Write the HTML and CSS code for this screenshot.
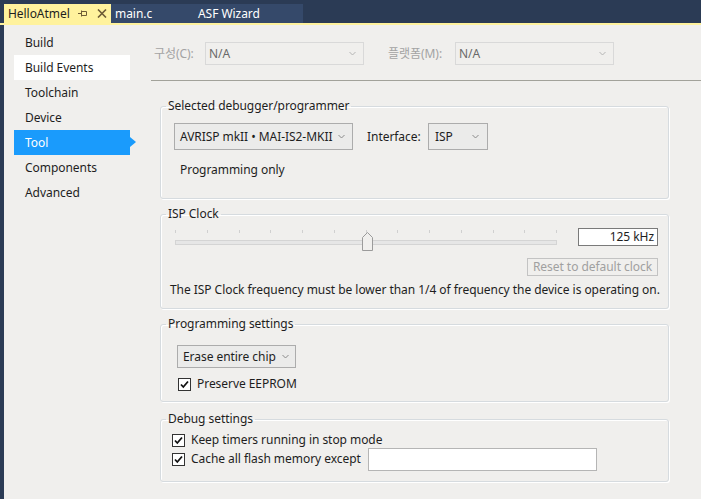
FILE: index.html
```html
<!DOCTYPE html>
<html>
<head>
<meta charset="utf-8">
<link rel="stylesheet" href="styles.css">
</head>
<body>
<div class="window">
  <div class="tabbar">
    <div class="tab tab-active">
      <span class="tab-title">HelloAtmel</span>
      <svg class="pin" width="9" height="7" viewBox="0 0 9 7"><path d="M0 3.5H4M3.5 0.5V6.5M4 1.5H8.5V5.5H4" fill="none" stroke="#6e5c36" stroke-width="1"/></svg>
      <svg class="close" width="10" height="9" viewBox="0 0 10 9"><path d="M1 0.5L9 8.5M9 0.5L1 8.5" stroke="#6e5c36" stroke-width="1.6"/></svg>
    </div>
    <div class="tab-group">
      <span class="tab tab-inactive t-main">main.c</span>
      <span class="tab tab-inactive t-asf">ASF Wizard</span>
    </div>
  </div>
  <div class="accent"></div>
  <div class="body">
    <nav class="sidebar">
      <div class="nav-item">Build</div>
      <div class="nav-item hover">Build Events</div>
      <div class="nav-item">Toolchain</div>
      <div class="nav-item">Device</div>
      <div class="nav-item selected">Tool</div>
      <div class="nav-item">Components</div>
      <div class="nav-item">Advanced</div>
    </nav>
    <main class="content">
      <div class="config-row">
        <span class="dis-label">구성(C):</span>
        <div class="combo combo-dis c-config"><span>N/A</span><svg width="7" height="5" viewBox="0 0 7 5"><path d="M0.5 1L3.5 4L6.5 1" fill="none" stroke="#b4b4b4"/></svg></div>
        <span class="dis-label l-platform">플랫폼(M):</span>
        <div class="combo combo-dis c-platform"><span>N/A</span><svg width="7" height="5" viewBox="0 0 7 5"><path d="M0.5 1L3.5 4L6.5 1" fill="none" stroke="#b4b4b4"/></svg></div>
      </div>
      <div class="separator"></div>

      <fieldset class="group g1">
        <legend>Selected debugger/programmer</legend>
        <div class="dbg-row">
          <div class="combo c-tool"><span>AVRISP mkII • MAI-IS2-MKII</span><svg width="7" height="5" viewBox="0 0 7 5"><path d="M0.5 1L3.5 4L6.5 1" fill="none" stroke="#8a8a8a"/></svg></div>
          <span class="if-label">Interface:</span>
          <div class="combo c-if"><span>ISP</span><svg width="7" height="5" viewBox="0 0 7 5"><path d="M0.5 1L3.5 4L6.5 1" fill="none" stroke="#8a8a8a"/></svg></div>
        </div>
        <div class="prog-only">Programming only</div>
      </fieldset>

      <fieldset class="group g2">
        <legend>ISP Clock</legend>
        <div class="clock-row">
          <div class="slider">
            <div class="ticks">
              <i></i><i></i><i></i><i></i><i></i><i></i><i></i><i></i><i></i><i></i><i></i><i></i><i></i>
            </div>
            <div class="track"></div>
            <svg class="thumb" width="11" height="19" viewBox="0 0 11 19"><path d="M0.5 18.5V5.5L5.5 0.5L10.5 5.5V18.5Z" fill="#f0efed" stroke="#9b9b9b"/></svg>
          </div>
          <div class="freq">125 kHz</div>
        </div>
        <div class="reset-row"><div class="reset-btn">Reset to default clock</div></div>
        <div class="clock-note">The ISP Clock frequency must be lower than 1/4 of frequency the device is operating on.</div>
      </fieldset>

      <fieldset class="group g3">
        <legend>Programming settings</legend>
        <div class="combo c-erase"><span>Erase entire chip</span><svg width="7" height="5" viewBox="0 0 7 5"><path d="M0.5 1L3.5 4L6.5 1" fill="none" stroke="#8a8a8a"/></svg></div>
        <label class="check-row cr-eeprom">
          <svg class="cb" width="13" height="13" viewBox="0 0 13 13"><rect x="0.5" y="0.5" width="12" height="12" fill="#fff" stroke="#333"/><path d="M3 6.5L5.3 9L10 3.5" fill="none" stroke="#111" stroke-width="1.8"/></svg>
          <span>Preserve EEPROM</span>
        </label>
      </fieldset>

      <fieldset class="group g4">
        <legend>Debug settings</legend>
        <label class="check-row cr-timers">
          <svg class="cb" width="13" height="13" viewBox="0 0 13 13"><rect x="0.5" y="0.5" width="12" height="12" fill="#fff" stroke="#333"/><path d="M3 6.5L5.3 9L10 3.5" fill="none" stroke="#111" stroke-width="1.8"/></svg>
          <span>Keep timers running in stop mode</span>
        </label>
        <div class="check-row cr-cache">
          <svg class="cb" width="13" height="13" viewBox="0 0 13 13"><rect x="0.5" y="0.5" width="12" height="12" fill="#fff" stroke="#333"/><path d="M3 6.5L5.3 9L10 3.5" fill="none" stroke="#111" stroke-width="1.8"/></svg>
          <span>Cache all flash memory except</span>
          <div class="except-box"></div>
        </div>
      </fieldset>
    </main>
  </div>
</div>
</body>
</html>
```
FILE: styles.css
```css
* { box-sizing: border-box; }
html, body { margin: 0; padding: 0; }
body {
  width: 701px;
  height: 499px;
  overflow: hidden;
  background: #f0efed;
  font-family: "Noto Sans", "Noto Sans CJK KR", sans-serif;
  font-size: 12px;
  line-height: 16px;
  letter-spacing: -0.05px;
  color: #1e1e1e;
}
.window { display: flex; flex-direction: column; height: 499px; }

.tabbar {
  height: 23px;
  background: #2b3b55;
  display: flex;
  align-items: flex-end;
  padding-left: 4px;
}
.tab {
  height: 19px;
  display: flex;
  align-items: center;
  font-size: 12px;
}
.tab-active {
  width: 107px;
  background: #fff29d;
  color: #1e1e1e;
  padding-left: 4px;
}
.tab-title { width: 66px; }
.pin { margin-left: 4px; }
.close { margin-left: 10px; }
.tab-group {
  display: flex;
  width: 192px;
  height: 19px;
  background: #35496a;
}
.tab-inactive { color: #ffffff; }
.t-main { padding-left: 4px; width: 87px; }
.accent { height: 2px; background: #fff29d; }

.body { flex: 1; display: flex; border-left: 4px solid #2b3b55; }

.sidebar {
  width: 146px;
  padding-top: 5px;
  padding-left: 10px;
}
.nav-item {
  width: 116px;
  height: 25px;
  line-height: 25px;
  padding-left: 11px;
  position: relative;
}
.nav-item.hover { background: #ffffff; }
.nav-item.selected { background: #1a9bfc; color: #ffffff; }
.nav-item.selected::after {
  content: "";
  position: absolute;
  left: 116px;
  top: 7px;
  border-left: 6px solid #1a9bfc;
  border-top: 5px solid transparent;
  border-bottom: 5px solid transparent;
}

.content {
  flex: 1;
  display: flex;
  flex-direction: column;
  padding-left: 10px;
}
.config-row {
  display: flex;
  align-items: center;
  margin-top: 17px;
  margin-left: -8px;
  padding-left: 2px;
  height: 23px;
}
.dis-label { color: #a3a3a3; width: 51px; }
.l-platform { margin-left: 24px; width: 67px; }
.combo {
  display: flex;
  align-items: center;
  justify-content: space-between;
  border: 1px solid #acacac;
  background: #ebebea;
  padding: 0 7px 0 6px;
}
.combo svg { flex: none; }
.combo-dis {
  border-color: #d9d9d9;
  background: #f0efed;
  color: #6a6a6a;
  height: 23px;
  width: 159px;
  padding-left: 3px;
}
.separator {
  height: 1px;
  background: #a2a29a;
  margin-top: 15px;
  margin-left: -9px;
}

.group {
  margin: 0;
  width: 509px;
  border: 1px solid #d6dbdf;
  border-radius: 3px;
  box-shadow: inset 1px 1px 0 #ffffff, 1px 1px 0 #ffffff;
  padding: 0 10px 0 0;
  min-width: 0;
}
.group legend {
  margin-left: 5px;
  padding: 0 2px;
  line-height: 16px;
}
.g1 { margin-top: 17px; padding-bottom: 20px; }
.g2 { margin-top: 7px; padding-bottom: 10px; }
.g3 { margin-top: 7px; padding-bottom: 9px; }
.g4 { margin-top: 9px; padding-bottom: 11px; }

.dbg-row {
  display: flex;
  align-items: center;
  margin-top: 9px;
  margin-left: 13px;
}
.c-tool { width: 179px; height: 27px; padding-left: 5px; }
.if-label { margin-left: 14px; width: 61px; }
.c-if { width: 60px; height: 27px; padding-left: 6px; padding-right: 8px; }
.prog-only { margin-top: 12px; margin-left: 19px; }

.clock-row {
  display: flex;
  align-items: flex-start;
  margin-top: 6px;
  margin-left: 14px;
  height: 23px;
}
.slider { position: relative; width: 384px; height: 23px; }
.ticks {
  display: flex;
  justify-content: space-between;
  height: 3px;
  margin-top: 2px;
}
.ticks i { display: block; width: 1px; height: 3px; background: #d0d0d0; }
.track {
  margin-top: 7px;
  height: 5px;
  background: #e6e6e6;
  border: 1px solid #d4d4d4;
}
.thumb { position: absolute; left: 187px; top: 4px; }
.freq {
  margin-left: 21px;
  width: 80px;
  height: 18px;
  background: #ffffff;
  border: 1px solid #7a7a7a;
  text-align: right;
  padding-right: 3px;
  line-height: 16px;
  font-size: 12px;
}
.reset-row { display: flex; justify-content: flex-end; margin-top: 7px; }
.reset-btn {
  width: 131px;
  height: 18px;
  border: 1px solid #c3c3c3;
  color: #a0a0a0;
  text-align: center;
  line-height: 16px;
}
.clock-note { margin-top: 6px; margin-left: 9px; white-space: nowrap; }

.c-erase {
  width: 119px;
  height: 23px;
  margin-top: 13px;
  margin-left: 16px;
  padding-left: 5px;
  padding-right: 6px;
}
.check-row { display: flex; align-items: center; height: 16px; }
.check-row .cb { flex: none; margin-right: 6px; }
.cr-eeprom { margin-top: 8px; margin-left: 17px; }
.cr-timers { margin-top: 5px; margin-left: 11px; }
.cr-cache { margin-left: 11px; height: 22px; margin-top: 0; }
.except-box {
  margin-left: 7px;
  width: 229px;
  height: 23px;
  background: #ffffff;
  border: 1px solid #b5b5b5;
}
```
